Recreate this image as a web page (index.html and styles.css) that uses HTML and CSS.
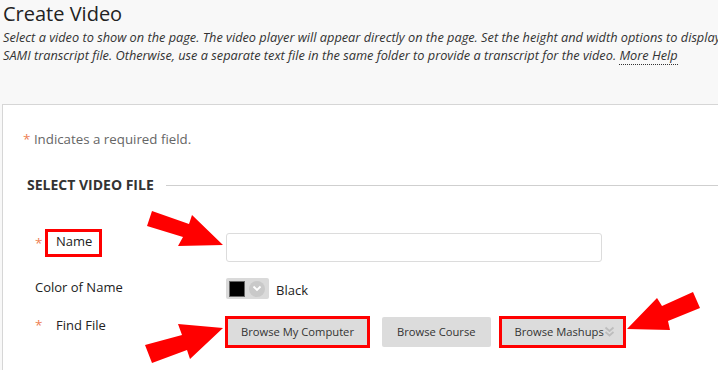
FILE: index.html
```html
<!DOCTYPE html>
<html lang="en">
<head>
<meta charset="utf-8">
<title>Create Video</title>
<link rel="stylesheet" href="styles.css">
</head>
<body>
<div class="page">
  <header class="intro">
    <h1 class="title">Create Video</h1>
    <p class="desc">Select a video to show on the page. The video player will appear directly on the page. Set the height and width options to display<br>SAMI transcript file. Otherwise, use a separate text file in the same folder to provide a transcript for the video. <a class="help">More Help</a></p>
  </header>
  <section class="panel">
    <p class="required"><span class="star">*</span> Indicates a required field.</p>
    <div class="legend"><h2>SELECT VIDEO FILE</h2><span class="rule"></span></div>
    <div class="row row-name">
      <div class="label"><span class="star">*</span><span class="boxed">Name</span></div>
      <div class="field"><input class="text-input" type="text"></div>
    </div>
    <div class="row row-color">
      <div class="label plain">Color of Name</div>
      <div class="field color-field">
        <span class="swatch"><span class="chip"></span><span class="drop"><svg width="10" height="7" viewBox="0 0 10 7"><path d="M1.5 1.5 L5 5 L8.5 1.5" fill="none" stroke="#fff" stroke-width="1.8"/></svg></span></span>
        <span class="color-name">Black</span>
      </div>
    </div>
    <div class="row row-file">
      <div class="label"><span class="star">*</span><span class="lbl">Find File</span></div>
      <div class="field buttons">
        <button class="btn hl">Browse My Computer</button>
        <button class="btn btn-course">Browse Course</button>
        <button class="btn hl btn-mash">Browse Mashups<svg class="dbl" width="11" height="12" viewBox="0 0 11 12"><path d="M1.5 1.5 L5.5 5 L9.5 1.5 M1.5 6 L5.5 9.5 L9.5 6" fill="none" stroke="#bdbdbd" stroke-width="1.8"/></svg></button>
      </div>
    </div>
  </section>
  <svg class="arrows" width="718" height="370" viewBox="0 0 718 370">
    <polygon points="152,211 189,224 192,215 223,245 178,246 183,237 147,226" fill="#ff0000"/>
    <polygon points="223,328 178,324 182,335 145,345 152,363 187,350 190,359" fill="#ff0000"/>
    <polygon points="627,329 657,298 662,306 693,292 700,308 668,321 670,330" fill="#ff0000"/>
  </svg>
</div>
</body>
</html>
```
FILE: styles.css
```css
html, body {
  margin: 0;
  padding: 0;
}
body {
  background: #f8f8f8;
  font-family: "Open Sans", "DejaVu Sans", sans-serif;
  color: #222;
  overflow: hidden;
  width: 718px;
  height: 370px;
}
.page {
  position: relative;
  width: 718px;
  height: 370px;
  overflow: hidden;
}
.intro {
  padding-left: 3px;
  height: 104px;
}
.title {
  margin: 0;
  font-size: 20px;
  font-weight: 400;
  line-height: 27px;
  color: #222;
}
.desc {
  margin: 1px 0 0;
  font-size: 12.75px;
  font-style: italic;
  line-height: 18px;
  color: #333;
  white-space: nowrap;
}
.help {
  border-bottom: 1px dotted #333;
}
.panel {
  margin-left: 2px;
  border-top: 1px solid #d6d6d6;
  border-left: 1px solid #d6d6d6;
  background: #fff;
  height: 270px;
  padding-left: 20px;
}
.required {
  margin: 0;
  padding-top: 24px;
  font-size: 13.3px;
  line-height: 20px;
  color: #666;
}
.star {
  color: #ee8155;
  font-size: 13.5px;
}
.legend {
  display: flex;
  align-items: center;
  margin-top: 26px;
  padding-left: 4px;
}
.legend h2 {
  margin: 0;
  font-size: 14px;
  font-weight: 700;
  line-height: 20px;
  color: #333;
}
.rule {
  flex: 1;
  margin-left: 12px;
  border-top: 1px solid #cfcfcf;
}
.row {
  display: flex;
  align-items: flex-start;
  padding-left: 12px;
}
.label {
  width: 191px;
  flex: none;
  display: flex;
  align-items: flex-start;
  font-size: 13px;
  color: #222;
}
.label .star {
  width: 10px;
  line-height: 16px;
}
.row-name {
  margin-top: 34px;
}
.row-name .star {
  margin-top: 6px;
}
.boxed {
  border: 3px solid #ff0000;
  line-height: 19px;
  padding: 0 7px 3px 8px;
}
.text-input {
  display: block;
  margin-top: 4px;
  width: 376px;
  height: 29px;
  box-sizing: border-box;
  border: 1px solid #dcdcdc;
  border-radius: 3px;
  background: #fff;
  padding: 0 6px;
}
.row-color {
  margin-top: 16px;
}
.plain {
  line-height: 18px;
}
.color-field {
  display: flex;
  align-items: flex-start;
}
.swatch {
  display: flex;
  align-items: center;
  width: 43px;
  height: 21px;
  box-sizing: border-box;
  background: #dadada;
  border-radius: 2px;
  padding-left: 3px;
}
.chip {
  width: 16px;
  height: 16px;
  box-sizing: border-box;
  background: #000;
  border: 1px solid #666;
}
.drop {
  width: 16px;
  height: 16px;
  margin-left: 4px;
  border-radius: 50%;
  background: #c9c9c9;
  display: flex;
  align-items: center;
  justify-content: center;
}
.color-name {
  margin-left: 7px;
  font-size: 13px;
  line-height: 24px;
  color: #222;
}
.row-file {
  margin-top: 15px;
}
.lbl {
  margin-left: 11px;
  line-height: 16px;
}
.buttons {
  display: flex;
  align-items: flex-start;
}
.btn {
  font-family: "Open Sans", "DejaVu Sans", sans-serif;
  font-size: 11.2px;
  line-height: 30px;
  height: 30px;
  padding: 0 15px;
  border: 0;
  border-radius: 2px;
  background: #dcdcdc;
  color: #333;
  display: flex;
  align-items: center;
}
.hl {
  outline: 3px solid #ff0000;
  outline-offset: -2px;
  border-radius: 0;
}
.btn-course {
  margin-left: 13px;
}
.btn-mash {
  margin-left: 9px;
  padding-right: 10px;
}
.arrows {
  position: absolute;
  left: 0;
  top: 0;
  pointer-events: none;
}
```
